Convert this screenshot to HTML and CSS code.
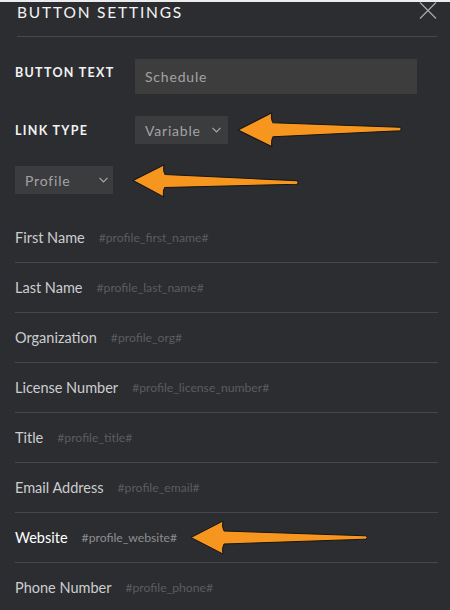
FILE: index.html
```html
<!DOCTYPE html>
<html>
<head>
<meta charset="utf-8">
<link rel="stylesheet" href="styles.css">
</head>
<body>
<div class="panel">
  <div class="header">
    <div class="title">BUTTON SETTINGS</div>
    <svg class="close" width="18" height="17" viewBox="0 0 18 17"><path d="M1 0.5 L17 16.5 M17 0.5 L1 16.5" stroke="#a9a9ab" stroke-width="1.2" fill="none"/></svg>
  </div>
  <div class="form">
    <div class="field">
      <div class="label label-top">BUTTON TEXT</div>
      <div class="input">Schedule</div>
    </div>
    <div class="field">
      <div class="label">LINK TYPE</div>
      <div class="select select-type">Variable
        <svg class="chev" width="9" height="6" viewBox="0 0 9 6"><path d="M0.5 0.8 L4.5 4.8 L8.5 0.8" stroke="#a8a8aa" stroke-width="1.2" fill="none"/></svg>
      </div>
    </div>
    <div class="field">
      <div class="select select-profile">Profile
        <svg class="chev" width="9" height="6" viewBox="0 0 9 6"><path d="M0.5 0.8 L4.5 4.8 L8.5 0.8" stroke="#a8a8aa" stroke-width="1.2" fill="none"/></svg>
      </div>
    </div>
  </div>
  <div class="list">
    <div class="row"><span class="name">First Name</span><span class="var">#profile_first_name#</span></div>
    <div class="row"><span class="name">Last Name</span><span class="var">#profile_last_name#</span></div>
    <div class="row"><span class="name">Organization</span><span class="var">#profile_org#</span></div>
    <div class="row"><span class="name">License Number</span><span class="var">#profile_license_number#</span></div>
    <div class="row"><span class="name">Title</span><span class="var">#profile_title#</span></div>
    <div class="row"><span class="name">Email Address</span><span class="var">#profile_email#</span></div>
    <div class="row active"><span class="name">Website</span><span class="var">#profile_website#</span></div>
    <div class="row"><span class="name">Phone Number</span><span class="var">#profile_phone#</span></div>
  </div>
  <svg class="arrows" width="450" height="610" viewBox="0 0 450 610">
    <g fill="#f7961f" stroke="#151517" stroke-width="1" stroke-linejoin="round">
      <path transform="translate(238,130) rotate(-0.35)" d="M0,0 L34,-17 Q32.5,-11.5 35,-7 L162,-1.7 Q164.5,0 162,1.7 L35,7 Q32.5,11.5 34,17 Z"/>
      <path transform="translate(133,180.5) rotate(0.7)" d="M0,0 L31,-16 Q29.5,-10.5 32,-6.5 L164,-1.7 Q166.5,0 164,1.7 L32,6.5 Q29.5,10.5 31,16 Z"/>
      <path transform="translate(191,537.5)" d="M0,0 L32,-16.5 Q30.5,-11 33,-6.5 L175,-1.7 Q177.5,0 175,1.7 L33,6.5 Q30.5,11 32,16.5 Z"/>
    </g>
  </svg>
</div>
</body>
</html>
```
FILE: styles.css
```css
html, body {
  margin: 0;
  padding: 0;
  background: #2c2d30;
}
body {
  font-family: "Lato", "Open Sans", sans-serif;
  width: 450px;
  height: 610px;
  overflow: hidden;
}
.panel {
  position: relative;
  width: 450px;
  height: 610px;
  border-top: 2px solid #ececec;
  box-sizing: border-box;
  overflow: hidden;
}
.header {
  display: flex;
  justify-content: space-between;
  align-items: flex-start;
  margin: 0 13px 0 17px;
  height: 34px;
  border-bottom: 1px solid #47484b;
}
.title {
  color: #f4f4f4;
  font-size: 15.5px;
  letter-spacing: 1.8px;
  line-height: 18px;
  margin-top: 1px;
}
.form {
  display: flex;
  flex-direction: column;
  gap: 22px;
  padding: 22px 0 0 15px;
}
.field {
  display: flex;
  align-items: center;
}
.label {
  width: 120px;
  color: #f2f2f2;
  font-size: 12.5px;
  font-weight: 700;
  letter-spacing: 1.3px;
}
.label-top {
  margin-bottom: 8px;
}
.input {
  width: 282px;
  height: 35px;
  box-sizing: border-box;
  padding-left: 10px;
  background: #3d3d3e;
  color: #a3a3a5;
  font-size: 14px;
  letter-spacing: 0.8px;
  line-height: 35px;
}
.select {
  height: 28px;
  box-sizing: border-box;
  padding-left: 10px;
  background: #3b3c3e;
  color: #a3a3a5;
  font-size: 14px;
  letter-spacing: 0.8px;
  display: flex;
  align-items: center;
}
.select-type {
  width: 93px;
}
.select-type .chev {
  margin-left: 11px;
}
.select-profile {
  width: 98px;
}
.select-profile .chev {
  margin-left: 29px;
}
.list {
  margin: 19px 12px 0 15px;
}
.row {
  height: 49px;
  border-bottom: 1px solid #46474a;
  display: flex;
  align-items: center;
  gap: 14px;
}
.name {
  color: #cdcdcf;
  font-size: 14.5px;
}
.var {
  color: #5b5c5f;
  font-size: 12.2px;
}
.row.active .name {
  color: #ffffff;
}
.row.active .var {
  color: #8e8e91;
}
.arrows {
  position: absolute;
  top: -2px;
  left: 0;
  pointer-events: none;
}
```
